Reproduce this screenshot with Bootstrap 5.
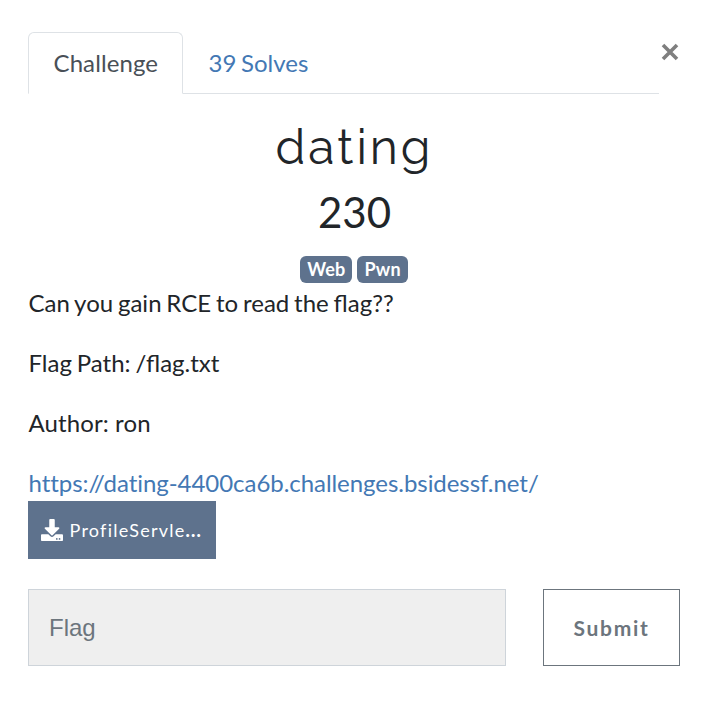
<!DOCTYPE html>
<html lang="en">
<head>
<meta charset="utf-8">
<meta name="viewport" content="width=device-width, initial-scale=1">
<title>dating</title>
<link href="https://cdn.jsdelivr.net/npm/bootstrap@5.3.0/dist/css/bootstrap.min.css" rel="stylesheet">
<style>
body{font-family:Lato,"Liberation Sans",sans-serif;font-size:24px;line-height:36px;color:#212529;background:#fff}
a{color:#4378b4;text-decoration:none}
.challenge{padding:32px 30px 0 28px}
.challenge .nav-tabs{width:631px;height:62px;border-color:#dee2e6}
.challenge .nav-link{padding:12px 0 12px 24.5px;width:155px;height:62px;color:#4378b4;border-radius:6px 6px 0 0;word-spacing:-1.5px}
.challenge .nav-link.active{color:#495057;letter-spacing:.1px}
.close-btn{width:18px;height:18px;margin:11px 1.5px 0 0;color:#7f7f7f;line-height:0}
.title{font-family:Raleway,Lato,sans-serif;font-weight:400;font-size:48px;line-height:58px;letter-spacing:3px;margin:24px 0 11px;padding-left:1px}
.value{font-size:42px;line-height:50px;font-weight:400;margin:0 0 19px;padding-left:1px}
.tags{gap:5px;height:27px}
.tags .badge{background:#5e728d;font-size:18px;line-height:18px;padding:4px 7px 5px;border-radius:6px;letter-spacing:.2px}
.description{padding:2px 0 0 .5px;word-spacing:-1.3px}
.description p{margin:0 0 24px}
.description .author{word-spacing:0;letter-spacing:.1px}
.description .link-line{margin:0;letter-spacing:-.05px;font-feature-settings:"liga" 0}
.file-btn{width:188px;height:58px;background:#5e728d;color:#fff;font-size:18px;letter-spacing:1.25px;border-radius:0;padding:0 12px 0 13px;gap:6.5px}
.file-btn:hover{background:#5e728d;color:#fff}
.file-name b{font-weight:900}
.answer{margin-top:30px;gap:37px}
.answer .form-control{width:478px;height:77px;background:#efefef;border:1px solid #ced4da;border-radius:0;padding:0 20px;font-family:"Liberation Sans",sans-serif;font-size:24px}
.answer .form-control::placeholder{color:#6c757d}
.answer .btn{width:137px;height:77px;border-radius:0;font-size:21px;font-weight:700;letter-spacing:1.7px;padding:0;color:#6c757d;border-color:#6c757d}
</style>
<script src="https://cdn.jsdelivr.net/npm/bootstrap@5.3.0/dist/js/bootstrap.bundle.min.js"></script>
</head>
<body>
<main class="challenge">
  <div class="d-flex justify-content-between align-items-start">
    <ul class="nav nav-tabs flex-nowrap">
      <li class="nav-item"><a class="nav-link active" href="#">Challenge</a></li>
      <li class="nav-item"><a class="nav-link" href="#">39 Solves</a></li>
    </ul>
    <button type="button" class="close-btn border-0 bg-transparent p-0" aria-label="Close">
      <svg width="18" height="18" viewBox="0 0 18 18" stroke="currentColor" stroke-width="3.6"><path d="M2 2 16 16M16 2 2 16"/></svg>
    </button>
  </div>
  <h2 class="title text-center">dating</h2>
  <h3 class="value text-center">230</h3>
  <div class="tags d-flex justify-content-center"><span class="badge">Web</span><span class="badge">Pwn</span></div>
  <div class="description">
    <p>Can you gain RCE to read the flag??</p>
    <p>Flag Path: /flag.txt</p>
    <p class="author">Author: ron</p>
    <p class="link-line"><a href="#">https://dating-4400ca6b.challenges.bsidessf.net/</a></p>
  </div>
  <a class="file-btn btn border-0 d-flex align-items-center" href="#">
    <svg class="flex-shrink-0" width="22" height="22" viewBox="0 0 512 512" fill="currentColor"><path d="M216 0h80c13 0 24 11 24 24v168h88c18 0 27 21 14 34L270 378c-7 7-20 7-28 0L90 226c-13-13-4-34 14-34h88V24c0-13 11-24 24-24zm296 376v112c0 13-11 24-24 24H24c-13 0-24-11-24-24V376c0-13 11-24 24-24h147l49 49c20 20 52 20 72 0l49-49h147c13 0 24 11 24 24zM388 464a20 20 0 1 0-40 0 20 20 0 0 0 40 0zm64 0a20 20 0 1 0-40 0 20 20 0 0 0 40 0z"/></svg>
    <span class="file-name">ProfileServle<b>...</b></span>
  </a>
  <form class="answer d-flex">
    <input class="form-control" type="text" placeholder="Flag" aria-label="Flag">
    <button class="btn btn-outline-secondary" type="button">Submit</button>
  </form>
</main>
</body>
</html>
